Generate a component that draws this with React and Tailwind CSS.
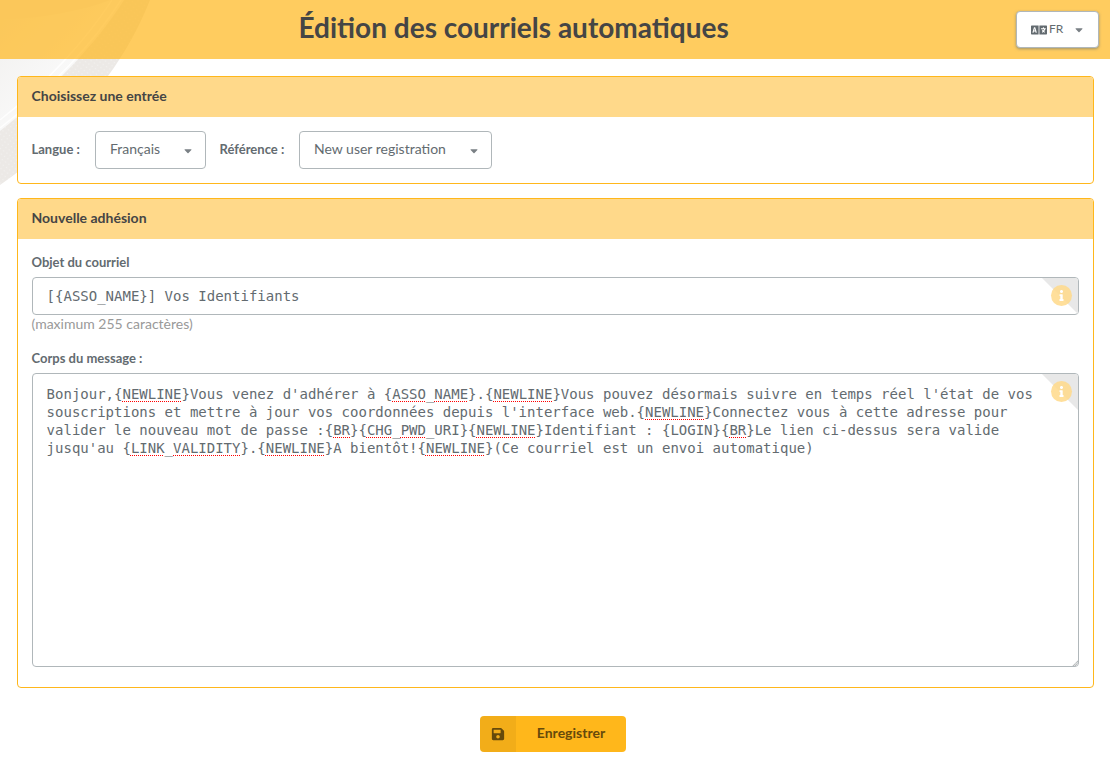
import { FaLanguage, FaSave, FaInfo } from 'react-icons/fa';

function Caret({ className = '' }) {
  return (
    <svg viewBox="0 0 8 5" className={`h-[5px] w-[8px] opacity-85 ${className}`} fill="currentColor">
      <path d="M1 0.2h6a.5.5 0 0 1 .35.85L4.5 3.9a.7.7 0 0 1-1 0L.65 1.05A.5.5 0 0 1 1 .2z" />
    </svg>
  );
}

function Misspelled({ children }) {
  return (
    <span className="underline decoration-[#ff0000] decoration-dotted decoration-[1px] underline-offset-[2px] [text-decoration-skip-ink:none]">
      {children}
    </span>
  );
}

function InfoCorner() {
  return (
    <span className="absolute top-0 right-0 h-[36px] w-[36px] overflow-hidden rounded-tr-[3px]">
      <svg viewBox="0 0 36 36" className="absolute inset-0 h-full w-full">
        <path d="M0 0H36V36Z" fill="#e8e8e8" />
      </svg>
      <span className="absolute top-[7px] left-[9px] flex h-[21px] w-[21px] items-center justify-center rounded-full bg-[#ffd98a]/85 text-white">
        <FaInfo className="h-[11px] w-[11px]" />
      </span>
    </span>
  );
}

function Panel({ title, children, className = '' }) {
  return (
    <section className={`overflow-hidden rounded-[4px] border border-[#ffb71b] bg-white ${className}`}>
      <h2 className="h-[40px] bg-[#ffd98a] pl-[13.5px] text-[14px] leading-[37px] font-bold text-[#454545]">{title}</h2>
      {children}
    </section>
  );
}

function Select({ children, className = '' }) {
  return (
    <div className={`flex h-[38px] items-center justify-between rounded-[4px] border border-[#b0b7ba] pr-[13px] pl-[14px] text-[14px] ${className}`}>
      <span className="-mt-[3px]">{children}</span>
      <Caret className="mt-[3px]" />
    </div>
  );
}

function Backdrop() {
  return (
    <svg className="absolute top-0 left-0 -z-10 h-[200px] w-[200px]" viewBox="0 0 200 200">
      <defs>
        <linearGradient id="sheet" x1="0" y1="0" x2="1" y2="1">
          <stop offset="0" stopColor="#f0efed" />
          <stop offset=".6" stopColor="#fafafa" />
          <stop offset="1" stopColor="#f0efee" />
        </linearGradient>
        <pattern id="weave" width="4" height="4" patternUnits="userSpaceOnUse" patternTransform="rotate(35)">
          <rect width="4" height="4" fill="#ece9e6" />
          <circle cx="1.5" cy="1.5" r=".8" fill="#f2f0ee" />
        </pattern>
      </defs>
      <path d="M0 0H150C138 30 124 54 108 76C80 115 40 158 0 185Z" fill="url(#weave)" />
      <path d="M0 0H124C98 42 50 92 0 131Z" fill="url(#sheet)" />
      <path d="M112 0C86 40 45 85 0 120M121 0C94 42 50 90 0 128" stroke="#fff" strokeOpacity=".8" strokeWidth="1.5" fill="none" />
      <path d="M0 0H110C80 12 40 18 0 20Z" fill="#f0efed" />
    </svg>
  );
}

export default function App() {
  return (
    <div className="relative isolate h-[767px] overflow-hidden bg-white font-[Lato,sans-serif] text-[14px] text-[#636b70]">
      <Backdrop />
      <header className="flex h-[59px] items-start justify-between bg-[#ffb71b]/70 pr-[11px] pl-[298.5px]">
        <h1 className="pt-[9px] text-[28px] leading-[36px] font-bold text-[#454545]">Édition des courriels automatiques</h1>
        <div className="mt-[11px] flex h-[37px] w-[83px] items-center rounded-[4px] border border-[#b0b7ba] bg-white pl-[13.5px] text-[12px] shadow-[0_1px_3px_rgba(90,110,120,0.6)]">
          <FaLanguage className="-mr-[0.5px] h-[16px] w-[16px] scale-y-110" />
          <span className="ml-[3px] -mt-px">FR</span>
          <Caret className="mt-[1px] ml-[11.5px]" />
        </div>
      </header>
      <main className="px-[17px] pt-[17px]">
        <Panel title="Choisissez une entrée" className="mr-[-1px] h-[108px]">
          <div className="flex items-center pt-[14px] pl-[13.5px]">
            <span className="w-[63.5px] text-[13px] font-bold">Langue :</span>
            <Select className="w-[111px]">Français</Select>
            <span className="ml-[13.5px] w-[79.5px] text-[13px] font-bold">Référence :</span>
            <Select className="w-[193px]">New user registration</Select>
          </div>
        </Panel>
        <Panel title="Nouvelle adhésion" className="mt-[14px] mr-[-1px] h-[490px]">
          <div className="px-[14px] pt-[14px]">
            <div className="-ml-[0.5px] text-[13px] leading-[18px] font-bold">Objet du courriel</div>
            <div className="relative mt-[6px] h-[38px] rounded-[4px] border border-[#b0b7ba] pl-[13.6px] font-['DejaVu_Sans_Mono',monospace] text-[14px] leading-[37px]">
              [{'{'}ASSO_NAME{'}'}] Vos Identifiants
              <InfoCorner />
            </div>
            <div className="-ml-[0.5px] text-[14px] leading-[17px] text-[#999]">(maximum 255 caractères)</div>
            <div className="-ml-[0.5px] mt-[17px] text-[13px] leading-[18px] font-bold">Corps du message :</div>
            <div className="relative mt-[6px] h-[294px] rounded-[4px] border border-[#b0b7ba] pt-[11px] pl-[13.6px] font-['DejaVu_Sans_Mono',monospace] text-[14px] leading-[18px] whitespace-nowrap">
              <div>Bonjour,{'{'}<Misspelled>NEWLINE</Misspelled>{"}Vous venez d'adhérer à {"}<Misspelled>ASSO</Misspelled>_<Misspelled>NAME</Misspelled>{'}.{'}<Misspelled>NEWLINE</Misspelled>{"}Vous pouvez désormais suivre en temps réel l'état de vos"}</div>
              <div>{"souscriptions et mettre à jour vos coordonnées depuis l'interface web.{"}<Misspelled>NEWLINE</Misspelled>{'}Connectez vous à cette adresse pour'}</div>
              <div>{'valider le nouveau mot de passe :{'}<Misspelled>BR</Misspelled>{'}{'}<Misspelled>CHG</Misspelled>_<Misspelled>PWD</Misspelled>{'_URI}{'}<Misspelled>NEWLINE</Misspelled>{'}Identifiant : {LOGIN}{'}<Misspelled>BR</Misspelled>{'}Le lien ci-dessus sera valide'}</div>
              <div>{"jusqu'au {"}<Misspelled>LINK</Misspelled>_<Misspelled>VALIDITY</Misspelled>{'}.{'}<Misspelled>NEWLINE</Misspelled>{'}A bientôt!{'}<Misspelled>NEWLINE</Misspelled>{'}(Ce courriel est un envoi automatique)'}</div>
              <InfoCorner />
              <svg className="absolute right-0 bottom-0 h-[7px] w-[7px]" viewBox="0 0 7 7">
                <path d="M1 7L7 1V5L5 7Z" fill="#dcdedf" />
                <path d="M2 7L7 2M4 7L7 4" stroke="#a5a9ab" strokeWidth="1" strokeDasharray="1 1" />
              </svg>
            </div>
          </div>
        </Panel>
        <div className="mt-[28px] flex justify-center pr-[4px]">
          <button className="flex h-[36px] w-[146px] overflow-hidden rounded-[4px] bg-[#ffb71b] text-[14px] font-bold text-[#664a0b]">
            <span className="flex h-full w-[36px] items-center justify-center bg-black/5">
              <FaSave className="h-[14px] w-[14px]" />
            </span>
            <span className="flex-1 text-center leading-[33px]">Enregistrer</span>
          </button>
        </div>
      </main>
    </div>
  );
}
